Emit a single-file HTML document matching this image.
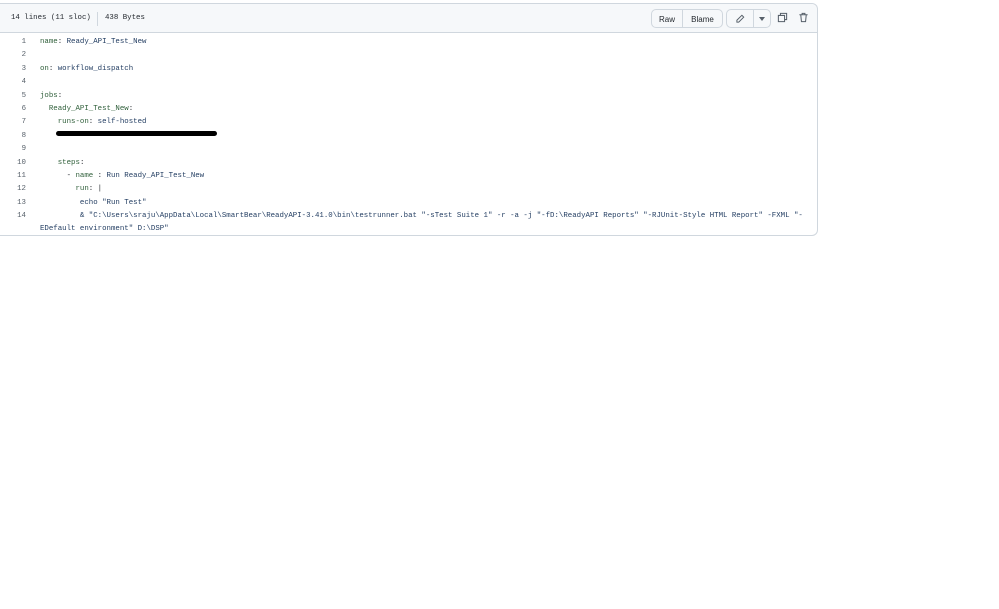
<!DOCTYPE html>
<html><head><meta charset="utf-8"><style>
body{margin:0;width:999px;height:609px;background:#fff;position:relative;overflow:hidden;font-family:"Liberation Sans",sans-serif}
.box{position:absolute;left:0;top:3px;width:817px;height:231px;border:1px solid #d0d7de;border-left:none;border-radius:0 6px 6px 0}
.hdr{position:absolute;left:0;top:0;width:817px;height:28px;background:#f6f8fa;border-bottom:1px solid #d0d7de;border-radius:0 6px 0 0}
.mono{font-family:"Liberation Mono","DejaVu Sans Mono",monospace;font-size:7.4px;color:#24292f;white-space:pre}
.ln{position:absolute;width:26px;text-align:right;color:#57606a;left:0}
.cd{position:absolute;left:40px}
.btn{position:absolute;top:5px;height:19px;border:1px solid #d0d7de;background:#f6f8fa;font-size:8px;line-height:19px;text-align:center;color:#24292f;box-sizing:border-box}
.g{color:#2f5f3a}.b{color:#1f3a5f}
.code{position:absolute;left:0;top:3px;width:999px}
</style></head><body>
<div class="box"><div class="hdr">
<div class="mono" style="position:absolute;left:11px;top:10px">14 lines (11 sloc)</div>
<div style="position:absolute;left:97px;top:8px;width:1px;height:14px;background:#d0d7de"></div>
<div class="mono" style="position:absolute;left:105px;top:10px">438 Bytes</div>
<div class="btn" style="left:651px;width:32px;border-radius:5px 0 0 5px">Raw</div>
<div class="btn" style="left:682px;width:41px;border-radius:0 5px 5px 0">Blame</div>
<div class="btn" style="left:726px;width:28px;border-radius:5px 0 0 5px"><svg width="10" height="10" viewBox="0 0 16 16" style="margin-top:4px"><path d="M11 2l3 3-8 8H3v-3z" fill="none" stroke="#57606a" stroke-width="1.5"/></svg></div>
<div class="btn" style="left:753px;width:18px;border-radius:0 5px 5px 0"><svg width="6" height="4" viewBox="0 0 6 4" style="margin-top:7px;vertical-align:top"><path d="M0 0h6L3 4z" fill="#57606a"/></svg></div>
<svg style="position:absolute;left:777px;top:8px" width="11" height="11" viewBox="0 0 16 16"><path d="M5 5V2h9v9h-3M2 5h9v9H2z" fill="none" stroke="#57606a" stroke-width="1.5"/></svg>
<svg style="position:absolute;left:798px;top:8px" width="11" height="11" viewBox="0 0 16 16"><path d="M2 4h12M6 4V2h4v2M4 4l1 10h6l1-10" fill="none" stroke="#57606a" stroke-width="1.5"/></svg>
</div></div>
<div class="mono code">
<div class="ln" style="top:35px">1</div><div class="cd" style="top:35px"><span class="g">name</span>: <span class="b">Ready_API_Test_New</span></div>
<div class="ln" style="top:48px">2</div>
<div class="ln" style="top:62px">3</div><div class="cd" style="top:62px"><span class="g">on</span>: <span class="b">workflow_dispatch</span></div>
<div class="ln" style="top:75px">4</div>
<div class="ln" style="top:89px">5</div><div class="cd" style="top:89px"><span class="g">jobs</span>:</div>
<div class="ln" style="top:102px">6</div><div class="cd" style="top:102px">  <span class="g">Ready_API_Test_New</span>:</div>
<div class="ln" style="top:115px">7</div><div class="cd" style="top:115px">    <span class="g">runs-on</span>: <span class="b">self-hosted</span></div>
<div class="ln" style="top:129px">8</div><div style="position:absolute;left:56px;top:128px;width:161px;height:5px;background:#000;border-radius:3px"></div>
<div class="ln" style="top:142px">9</div>
<div class="ln" style="top:156px">10</div><div class="cd" style="top:156px">    <span class="g">steps</span>:</div>
<div class="ln" style="top:169px">11</div><div class="cd" style="top:169px">      - <span class="g">name</span> : <span class="b">Run Ready_API_Test_New</span></div>
<div class="ln" style="top:182px">12</div><div class="cd" style="top:182px">        <span class="g">run</span>: |</div>
<div class="ln" style="top:196px">13</div><div class="cd" style="top:196px" ><span class="b">         echo "Run Test"</span></div>
<div class="ln" style="top:209px">14</div><div class="cd b" style="top:209px">         &amp; "C:\Users\sraju\AppData\Local\SmartBear\ReadyAPI-3.41.0\bin\testrunner.bat "-sTest Suite 1" -r -a -j "-fD:\ReadyAPI Reports" "-RJUnit-Style HTML Report" -FXML "-</div>
<div class="cd b" style="top:222px">EDefault environment" D:\DSP"</div>
</div>
</body></html>
